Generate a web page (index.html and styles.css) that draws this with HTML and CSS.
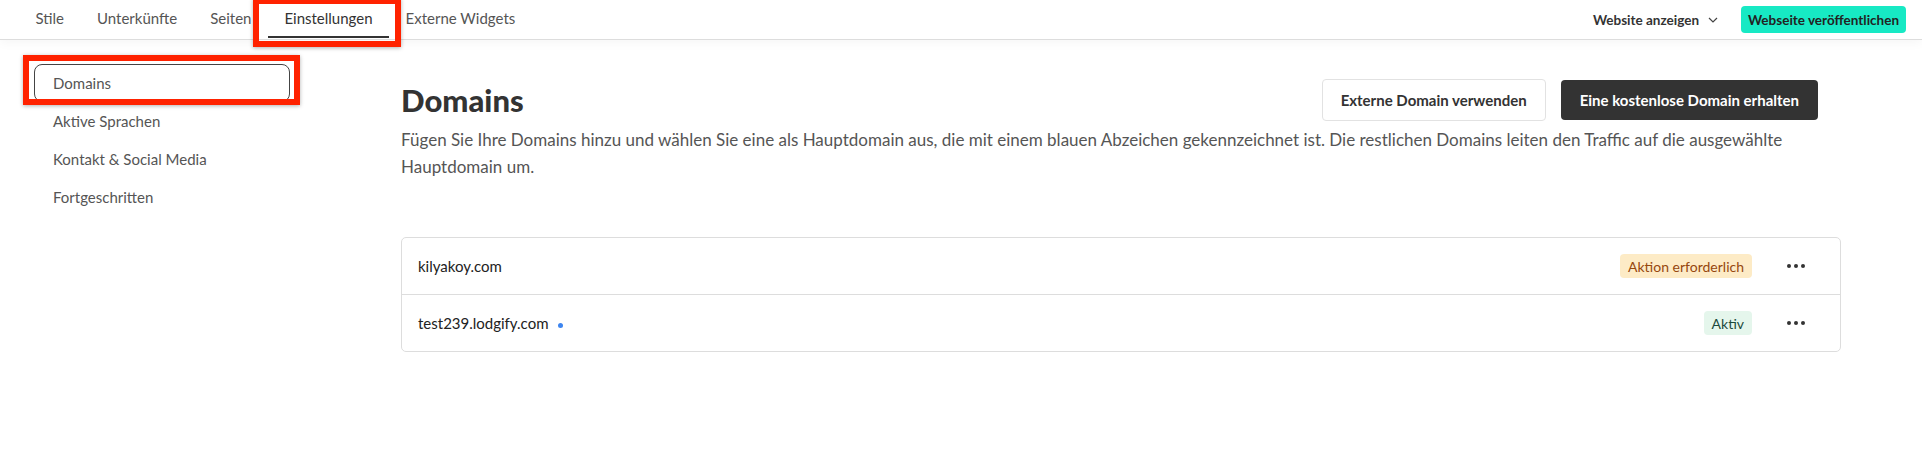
FILE: index.html
```html
<!DOCTYPE html>
<html lang="de">
<head>
    <meta charset="UTF-8">
    <meta name="viewport" content="width=device-width, initial-scale=1.0">
    <title>Domains</title>
    <link rel="stylesheet" href="styles.css">
</head>
<body>
    <!-- Top navigation -->
    <header class="topbar">
        <nav class="tabs">
            <a class="tab" href="#">Stile</a>
            <a class="tab" href="#">Unterkünfte</a>
            <a class="tab" href="#">Seiten</a>
            <a class="tab active" href="#">Einstellungen</a>
            <a class="tab" href="#">Externe Widgets</a>
        </nav>
        <div class="topbar-actions">
            <a class="view-site" href="#">Website anzeigen
                <svg class="chevron" width="10" height="6" viewBox="0 0 10 6"><path d="M1 1l4 4 4-4" fill="none" stroke="#444" stroke-width="1.2"/></svg>
            </a>
            <button class="publish">Webseite veröffentlichen</button>
        </div>
    </header>

    <div class="layout">
        <!-- Settings menu -->
        <aside class="sidebar">
            <a class="side-item selected" href="#">Domains</a>
            <a class="side-item" href="#">Aktive Sprachen</a>
            <a class="side-item" href="#">Kontakt &amp; Social Media</a>
            <a class="side-item" href="#">Fortgeschritten</a>
        </aside>

        <main class="content">
            <div class="content-head">
                <h1>Domains</h1>
                <div class="head-buttons">
                    <button class="btn btn-light">Externe Domain verwenden</button>
                    <button class="btn btn-dark">Eine kostenlose Domain erhalten</button>
                </div>
            </div>
            <p class="intro">Fügen Sie Ihre Domains hinzu und wählen Sie eine als Hauptdomain aus, die mit einem blauen Abzeichen gekennzeichnet ist. Die restlichen Domains leiten den Traffic auf die ausgewählte Hauptdomain um.</p>

            <div class="domain-list">
                <div class="domain-row">
                    <span class="domain-name">kilyakoy.com</span>
                    <span class="badge badge-warn">Aktion erforderlich</span>
                    <button class="more"><i></i><i></i><i></i></button>
                </div>
                <div class="domain-row">
                    <span class="domain-name">test239.lodgify.com <span class="primary-dot"></span></span>
                    <span class="badge badge-ok">Aktiv</span>
                    <button class="more"><i></i><i></i><i></i></button>
                </div>
            </div>
        </main>
    </div>

    <!-- highlight boxes from the screenshot -->
    <div class="mark mark-tab"></div>
    <div class="mark mark-side"></div>
</body>
</html>
```

FILE: styles.css
```css
body {
    margin: 0;
    font-family: Lato, "Noto Sans", sans-serif;
    color: #333;
    background: #fff;
}

a {
    text-decoration: none;
}

button {
    font-family: inherit;
    cursor: pointer;
}

/* top bar */
.topbar {
    height: 39px;
    display: flex;
    justify-content: space-between;
    align-items: center;
    border-bottom: 1px solid #ddd;
    box-shadow: 0 3px 10px rgba(0, 0, 0, 0.04);
    padding: 0 16px 0 19px;
}

.tabs {
    display: flex;
    height: 100%;
}

.tab {
    display: flex;
    align-items: center;
    padding: 0 16.5px;
    font-size: 15px;
    color: #555;
    border-bottom: 2px solid transparent;
    margin-bottom: 1px;
}

.tab.active {
    color: #333;
    border-bottom-color: #333;
}

.topbar-actions {
    display: flex;
    align-items: center;
}

.view-site {
    display: flex;
    align-items: center;
    gap: 9px;
    font-size: 13.5px;
    font-weight: 700;
    color: #333;
    margin-right: 23px;
}

.publish {
    height: 27px;
    padding: 0 7px;
    border: none;
    border-radius: 4px;
    background: #17e9c4;
    color: #222;
    font-size: 13.5px;
    font-weight: 700;
}

/* page */
.layout {
    display: flex;
    padding: 24px 0 0 34px;
}

.sidebar {
    width: 256px;
    flex-shrink: 0;
    display: flex;
    flex-direction: column;
}

.side-item {
    height: 38px;
    display: flex;
    align-items: center;
    padding-left: 18px;
    font-size: 15px;
    color: #555;
    border: 1px solid transparent;
    border-radius: 8px;
    box-sizing: border-box;
}

.side-item.selected {
    border-color: #444;
}

.content {
    width: 1440px;
    margin-left: 111px;
    padding-top: 15px;
}

.content-head {
    display: flex;
    justify-content: space-between;
    align-items: center;
    padding-right: 23px;
}

h1 {
    margin: 0;
    font-size: 31px;
    font-weight: 900;
    color: #333;
}

.head-buttons {
    display: flex;
    gap: 15px;
}

.btn {
    height: 42px;
    padding: 0 18px;
    border-radius: 4px;
    font-size: 15px;
    font-weight: 700;
}

.btn-light {
    background: #fff;
    border: 1px solid #e2e2e2;
    color: #333;
}

.btn-dark {
    height: 40px;
    margin-top: 1px;
    padding: 0 19px;
    background: #333;
    border: none;
    color: #fff;
}

.intro {
    margin: 5px 0 0;
    font-size: 17px;
    line-height: 27px;
    color: #555;
}

/* domain table */
.domain-list {
    margin-top: 57px;
    border: 1px solid #ddd;
    border-radius: 5px;
}

.domain-row {
    height: 56px;
    display: flex;
    align-items: center;
    padding: 0 35px 0 16px;
}

.domain-row + .domain-row {
    border-top: 1px solid #ddd;
}

.domain-name {
    flex: 1;
    font-size: 15px;
    color: #222;
}

.primary-dot {
    display: inline-block;
    width: 5px;
    height: 5px;
    margin-left: 6px;
    border-radius: 50%;
    background: #3d85f0;
    vertical-align: middle;
}

.badge {
    height: 24px;
    display: flex;
    align-items: center;
    padding: 0 8px;
    border-radius: 4px;
    font-size: 14px;
}

.badge-warn {
    background: #fdebc6;
    color: #96470e;
}

.badge-ok {
    background: #e5f6ec;
    color: #1c4a3c;
}

.more {
    display: flex;
    gap: 3px;
    margin-left: 35px;
    padding: 0;
    border: none;
    background: none;
}

.more i {
    width: 4px;
    height: 4px;
    border-radius: 50%;
    background: #333;
}

/* red highlight frames */
.mark {
    position: absolute;
    border: 6px solid #ff2200;
    box-sizing: border-box;
    box-shadow: 0 1px 4px rgba(0, 0, 0, 0.3);
}

.mark-tab {
    left: 253px;
    top: -2px;
    width: 148px;
    height: 49px;
}

.mark-side {
    left: 23px;
    top: 55px;
    width: 277px;
    height: 50px;
}
```
